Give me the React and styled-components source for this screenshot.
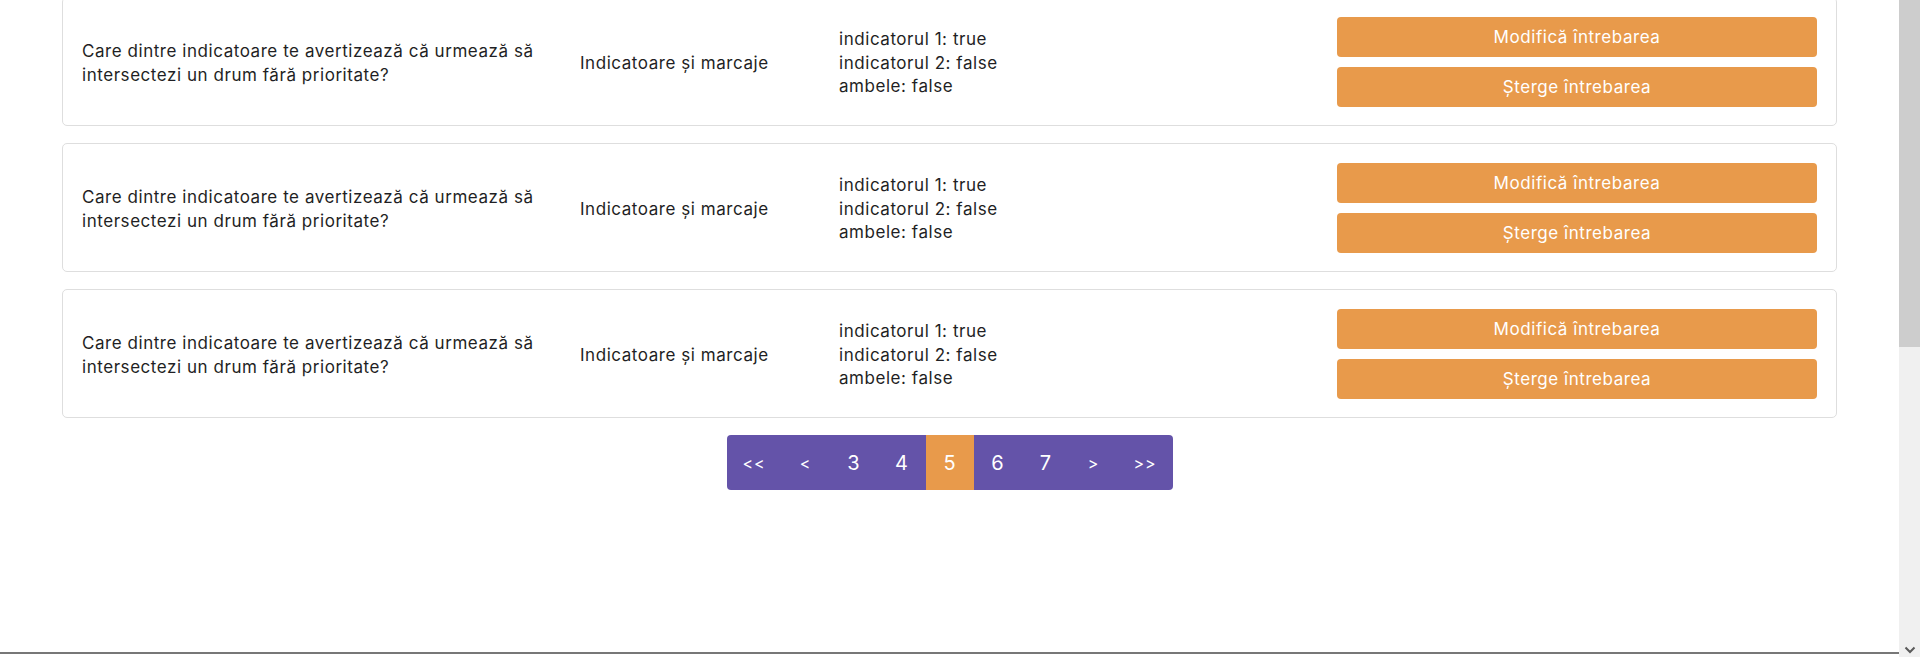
import React from 'react'
import styled, { createGlobalStyle } from 'styled-components'

const GlobalStyle = createGlobalStyle`
  html, body {
    margin: 0;
    padding: 0;
    height: 100%;
    overflow: hidden;
    background: #fff;
  }
  body {
    font-family: Inter, "Noto Sans", "DejaVu Sans", sans-serif;
    color: #1f1f24;
  }
`

const Shell = styled.div`
  display: flex;
  height: 100vh;
  width: 100vw;
`
const Main = styled.div`
  flex: 1;
  display: flex;
  flex-flow: column;
  min-width: 0;
`
const Content = styled.div`
  flex: 1;
  padding: 0 62px;
  overflow: hidden;
`
const List = styled.div`
  display: flex;
  flex-flow: column;
  gap: 17px;
  margin-top: -3px;
`
const Card = styled.div`
  display: grid;
  grid-template-columns: 498px 259px 1fr 480px;
  align-items: center;
  padding: 19px 19px 18px;
  border: 1px solid #dedede;
  border-radius: 5px;
  background: #fff;
  font-size: 17px;
  line-height: 23.5px;
  letter-spacing: 0.55px;
`
const TextCell = styled.div`
  padding-top: 3px;
  padding-right: ${props => (props.wrap ? '20px' : '0')};
  display: flex;
  flex-flow: column;
`
const Actions = styled.div`
  display: flex;
  flex-flow: column;
  gap: 10px;
`
const ActionButton = styled.button`
  height: 40px;
  border: none;
  border-radius: 4px;
  background: #e89a4b;
  color: #fff;
  font-family: inherit;
  font-size: 17px;
  letter-spacing: 0.55px;
  cursor: pointer;
`
const Pager = styled.div`
  display: flex;
  justify-content: center;
  margin-top: 17px;
`
const PagerBar = styled.div`
  display: flex;
  background: #6453a9;
  border-radius: 4px;
  overflow: hidden;
`
const PageItem = styled.div`
  display: flex;
  align-items: center;
  justify-content: center;
  height: 55px;
  width: ${props => (props.wide ? '55px' : '48px')};
  background: ${props => (props.active ? '#e89a4b' : 'transparent')};
  color: #fff;
  font-size: ${props => (props.arrow ? '16px' : '20px')};
  letter-spacing: ${props => (props.arrow ? '1px' : '0')};
`
const BottomRule = styled.div`
  height: 2px;
  background: #777;
  margin-bottom: 3px;
`
const ScrollTrack = styled.div`
  width: 21px;
  background: #f0f0f0;
  display: flex;
  flex-flow: column;
  justify-content: space-between;
  align-items: center;
`
const ScrollThumb = styled.div`
  width: 100%;
  height: 347px;
  background: #cdcdcd;
`

const questions = [1, 2, 3].map(id => ({
  id,
  text: 'Care dintre indicatoare te avertizează că urmează să intersectezi un drum fără prioritate?',
  category: 'Indicatoare și marcaje',
  answers: ['indicatorul 1: true', 'indicatorul 2: false', 'ambele: false']
}))

const pages = [
  { label: '<<', wide: true, arrow: true },
  { label: '<', arrow: true },
  { label: '3' },
  { label: '4' },
  { label: '5', active: true },
  { label: '6' },
  { label: '7' },
  { label: '>', arrow: true },
  { label: '>>', wide: true, arrow: true }
]

export default function App() {
  return (
    <Shell>
      <GlobalStyle />
      <Main>
        <Content>
          <List>
            {questions.map(q => (
              <Card key={`q-${q.id}`}>
                <TextCell wrap>{q.text}</TextCell>
                <TextCell>{q.category}</TextCell>
                <TextCell>
                  {q.answers.map(a => <span key={a}>{a}</span>)}
                </TextCell>
                <Actions>
                  <ActionButton>Modifică întrebarea</ActionButton>
                  <ActionButton>Șterge întrebarea</ActionButton>
                </Actions>
              </Card>
            ))}
          </List>
          <Pager>
            <PagerBar>
              {pages.map(p => (
                <PageItem key={p.label} wide={p.wide} active={p.active} arrow={p.arrow}>
                  {p.label}
                </PageItem>
              ))}
            </PagerBar>
          </Pager>
        </Content>
        <BottomRule />
      </Main>
      <ScrollTrack>
        <ScrollThumb />
        <svg width="12" height="8" viewBox="0 0 12 8" style={{ marginBottom: 3 }}>
          <path d="M1.5 1.5 L6 6 L10.5 1.5" fill="none" stroke="#5a5a5a" strokeWidth="2" />
        </svg>
      </ScrollTrack>
    </Shell>
  )
}
